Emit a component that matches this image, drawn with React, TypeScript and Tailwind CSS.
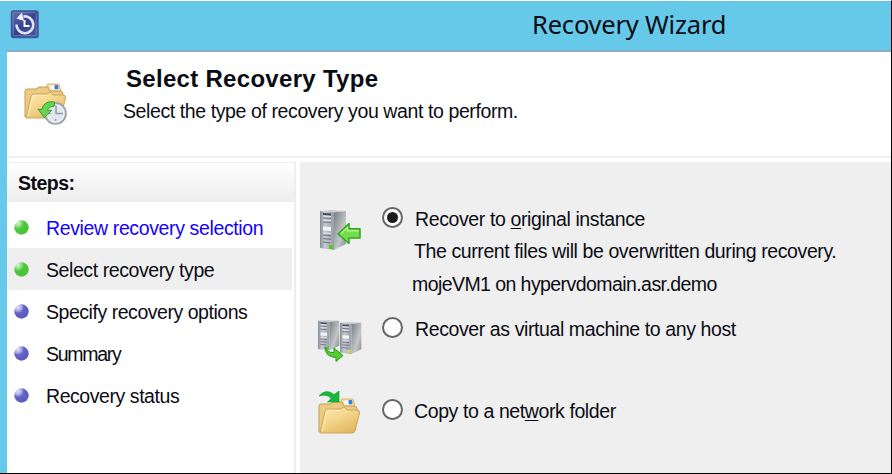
import React from "react";

const sans = "font-['Liberation_Sans',Arial,sans-serif] text-[19.5px] leading-6 whitespace-nowrap";

function AppIcon() {
  return (
    <svg width="30" height="30" viewBox="0 0 30 30" className="block">
      <defs>
        <linearGradient id="appBg" x1="0" y1="0" x2="1" y2="1">
          <stop offset="0" stopColor="#6670b4" />
          <stop offset="0.5" stopColor="#35418f" />
          <stop offset="1" stopColor="#4a5aa6" />
        </linearGradient>
      </defs>
      <rect x="1.5" y="2" width="26.5" height="26.5" rx="2" fill="url(#appBg)" stroke="#3d5a91" strokeWidth="1.5" />
      <rect x="3.2" y="3.7" width="23" height="23" rx="1" fill="none" stroke="#8290c8" strokeWidth="0.7" />
      <path d="M13.500 7.500a8.400 8.400 0 1 1-7 8" fill="none" stroke="#dfe2f2" strokeWidth="2.600" />
      <path d="M6.500 9.500L12 3.500l2 8.500z" fill="#eef0fa" />
      <path d="M14.500 11v6h5" fill="none" stroke="#fff" strokeWidth="2" />
    </svg>
  );
}

function FolderShape({ id }: { id: string }) {
  return (
    <g>
      <defs>
        <linearGradient id={id} x1="0" y1="0" x2="0.7" y2="1">
          <stop offset="0" stopColor="#fce7ae" />
          <stop offset="0.45" stopColor="#f6d891" />
          <stop offset="1" stopColor="#e3b660" />
        </linearGradient>
      </defs>
      <path d="M23 9V2q0-1 1-1h10q1 0 1.4 1L37 10z" fill="#f7dfa4" stroke="#d9b468" strokeWidth="1" />
      <rect x="26" y="2.5" width="8" height="4" fill="#f5f8ff" />
      <rect x="30.5" y="2" width="3.8" height="4.2" rx="1" fill="#387be6" />
      <path d="M1 34V8q0-2 2-2h9l3-2h9l2 4h10q3 0 3 3l-3 23z" fill="#ecca82" stroke="#c59e55" strokeWidth="1" />
      <path d="M2.2 34.5L7 13q.5-2 3-2h12l4-2 3 3h10q3 0 2.5 3L37 33q-.5 2-3 2H3q-1 0-.8-.5z" fill={`url(#${id})`} stroke="#cda558" strokeWidth="1" />
      <path d="M4 33L8.5 14q.3-1.5 2-1.500H22" fill="none" stroke="#fff0c4" strokeWidth="0.9" />
    </g>
  );
}

function FolderClockIcon() {
  return (
    <svg width="46" height="46" viewBox="0 0 46 46" className="block">
      <FolderShape id="fa" />
      <circle cx="31.500" cy="30.500" r="10.600" fill="#c9d0d8" stroke="#959da4" strokeWidth="1.400" />
      <circle cx="31.500" cy="30.500" r="8.400" fill="#dfe6ee" stroke="#f6f8fa" strokeWidth="1.200" />
      <path d="M32 22.500v8h7M31.500 36v2M24.500 30.500h2" fill="none" stroke="#939eac" strokeWidth="1.500" />
      <path d="M30.500 19q-10-2-13 7.500l-3.500-.3 6.500 8.300 7-7-4.200-.5q2-4 7.200-4z" fill="#69d453" stroke="#2f9e2b" strokeWidth="1" />
    </svg>
  );
}

function FolderCopyIcon() {
  return (
    <svg width="44" height="46" viewBox="0 0 44 46" className="block">
      <g transform="translate(0 8)">
        <FolderShape id="fb" />
      </g>
      <path d="M1 6Q8-2 16 4.500L21 1v11H9.500l3.700-3.600Q9 3.500 1 6z" fill="#18b93a" stroke="#0c9a2b" strokeWidth="0.6" />
    </svg>
  );
}

function ServerShape({ id, led = "#4ecb1d" }: { id: string; led?: string }) {
  return (
    <g>
      <defs>
        <linearGradient id={id + "f"} x1="0" y1="0" x2="1" y2="0">
          <stop offset="0" stopColor="#858c96" />
          <stop offset="0.35" stopColor="#c5cbd2" />
          <stop offset="1" stopColor="#969da6" />
        </linearGradient>
        <linearGradient id={id + "s"} x1="0" y1="0" x2="1" y2="1">
          <stop offset="0" stopColor="#777d80" />
          <stop offset="0.6" stopColor="#c3c6c8" />
          <stop offset="1" stopColor="#858a8c" />
        </linearGradient>
      </defs>
      <path d="M0 1l14 1v38L0 38z" fill={`url(#${id}f)`} />
      <path d="M14 2L26 1v33l-12 6z" fill={`url(#${id}s)`} />
      <path d="M0 1L12 0l14 1-12 1.500z" fill="#c9cdd1" />
      <path d="M3 4l8 .5" stroke="#454c55" strokeWidth="2" />
      <path d="M3 8l8 .5M3 12l8 .5M3 25l8 .7M3 28.500l8 .8M3 32l7 .8" stroke="#717983" strokeWidth="1.200" />
      <path d="M3 16.500l8 .4v4l-8-.4z" fill="#f1f4f7" />
      <path d="M3 6l8 .5M3 10l8 .5M3 23l8 .5" stroke="#e3e7ec" strokeWidth="1" />
      <path d="M9 35h4v4H9z" fill={led} />
    </g>
  );
}

function ServerRestoreIcon() {
  return (
    <svg width="44" height="44" viewBox="0 0 44 44" className="block">
      <g transform="translate(2 1)">
        <ServerShape id="sa" />
      </g>
      <path d="M20 25L31 14.500v5.200H42v9.300H31v5.500z" fill="#75dc4a" stroke="#31a425" strokeWidth="1.500" strokeLinejoin="round" />
      <path d="M23 24.500l6.500-6v3.200H40.500" fill="none" stroke="#b6f391" strokeWidth="1.400" />
    </svg>
  );
}

function ServerPairIcon() {
  return (
    <svg width="46" height="44" viewBox="0 0 46 44" className="block">
      <g transform="translate(0 0) scale(.82 .76)">
        <ServerShape id="sb" />
      </g>
      <g transform="translate(22 2) scale(.82 .8)">
        <ServerShape id="sc" led="#d5dc36" />
      </g>
      <path d="M7 27q2 6 9 5.500v-4.500l9 7.500-7 6v-4Q7 37 7 27z" fill="#55cd30" stroke="#2a9d20" strokeWidth="1" strokeLinejoin="round" />
    </svg>
  );
}

function Bullet({ done }: { done: boolean }) {
  const id = done ? "dotGreen" : "dotBlue";
  return (
    <svg width="15" height="16" viewBox="0 0 15 16" className="block shrink-0">
      <defs>
        <radialGradient id={id} cx="0.25" cy="0.2" r="0.75">
          <stop offset="0" stopColor={done ? "#d9f7d2" : "#e6e7fb"} />
          <stop offset="0.35" stopColor={done ? "#8ad97c" : "#a4a6df"} />
          <stop offset="0.55" stopColor={done ? "#4cc83c" : "#6463c8"} />
          <stop offset="1" stopColor={done ? "#4ac23a" : "#5d5bbb"} />
        </radialGradient>
      </defs>
      <circle cx="7.500" cy="8.500" r="7.200" fill={`url(#${id})`} />
    </svg>
  );
}

function Radio({ checked = false }: { checked?: boolean }) {
  return (
    <span className="flex size-[21px] shrink-0 items-center justify-center rounded-full border-2 border-[#666] bg-white">
      {checked && <span className="size-[11px] rounded-full bg-[#1c1c1c]" />}
    </span>
  );
}

const steps = [
  { label: "Review recovery selection", done: true, cls: "text-[#1400ff] tracking-[-0.37px]" },
  { label: "Select recovery type", done: true, cls: "tracking-[-0.42px]" },
  { label: "Specify recovery options", done: false, cls: "tracking-[-0.46px]" },
  { label: "Summary", done: false, cls: "tracking-[-1.3px]" },
  { label: "Recovery status", done: false, cls: "tracking-[-0.44px]" },
];

export default function App() {
  return (
    <div className="flex h-[474px] w-[892px] flex-col overflow-hidden border-t border-r border-b border-t-white border-r-black border-b-black bg-[#66c9ea] text-[#0c0c14]">
      <header className="flex h-[49px] shrink-0 items-start">
        <div className="pt-2 pl-2.5">
          <AppIcon />
        </div>
        <h1 className="pl-[492px] pt-[5px] font-['Noto_Sans',sans-serif] text-[25.5px] leading-9 tracking-[-0.2px] whitespace-nowrap">Recovery Wizard</h1>
      </header>
      <div className="ml-[7px] flex min-h-0 flex-1 flex-col border-t-2 border-[#87afc8] bg-white">
        <section className="flex h-[104px] shrink-0 items-start">
          <div className="pt-[31px] pl-[17px]">
            <FolderClockIcon />
          </div>
          <div className="pl-[53px]">
            <h2 className="mt-[13px] pl-[3px] font-['Liberation_Sans',Arial,sans-serif] text-[24px] leading-7 font-bold tracking-[0.3px] whitespace-nowrap">Select Recovery Type</h2>
            <p className={`${sans} mt-[6px] tracking-[-0.4px]`}>Select the type of recovery you want to perform.</p>
          </div>
        </section>
        <div className="h-0.5 shrink-0 bg-[#f0f0f0]" />
        <div className="flex min-h-0 flex-1 pt-1">
          <aside className="mr-1 w-[289px] shrink-0 border-t border-r-2 border-[#eee]">
            <div className={`${sans} h-[39px] bg-linear-to-b from-white to-[#ededed] pt-[8px] pl-[11px] font-bold tracking-[-0.5px]`}>Steps:</div>
            <ul className="pt-[4px]">
              {steps.map((s, i) => (
                <li key={s.label} className={`mr-0.5 flex h-[42px] items-center gap-[17px] pl-[7px] ${i === 1 ? "bg-[#efefef]" : ""}`}>
                  <Bullet done={s.done} />
                  <span className={`${sans} pt-px ${s.cls}`}>{s.label}</span>
                </li>
              ))}
            </ul>
          </aside>
          <main className="flex min-w-0 flex-1 flex-col bg-[#efefef] pl-[18px]">
            <div className="flex h-[153px] shrink-0 items-start">
              <div className="w-[64px] pt-[47px]">
                <ServerRestoreIcon />
              </div>
              <div className="pt-[45px]">
                <Radio checked />
              </div>
              <div className={`${sans} pt-[45px] pl-[9px]`}>
                <p className="pl-[3px] tracking-[-0.38px]">Recover to <u className="underline-offset-2">o</u>riginal instance</p>
                <p className="mt-2 pl-[2px] tracking-[-0.4px]">The current files will be overwritten during recovery.</p>
                <p className="mt-[9px] tracking-[-0.57px]">mojeVM1 on hypervdomain.asr.demo</p>
              </div>
            </div>
            <div className="flex h-[75px] shrink-0 items-start">
              <div className="w-[64px] pt-[5px]">
                <ServerPairIcon />
              </div>
              <div className="pt-[2px]">
                <Radio />
              </div>
              <p className={`${sans} pt-[2px] pl-[12px] tracking-[-0.4px]`}>Recover as virtual machine to any host</p>
            </div>
            <div className="flex items-start">
              <div className="w-[64px]">
                <FolderCopyIcon />
              </div>
              <div className="pt-[9px]">
                <Radio />
              </div>
              <p className={`${sans} pt-[9px] pl-[11px] tracking-[-0.4px]`}>Copy to a net<u className="underline-offset-2">w</u>ork folder</p>
            </div>
          </main>
        </div>
      </div>
    </div>
  );
}
